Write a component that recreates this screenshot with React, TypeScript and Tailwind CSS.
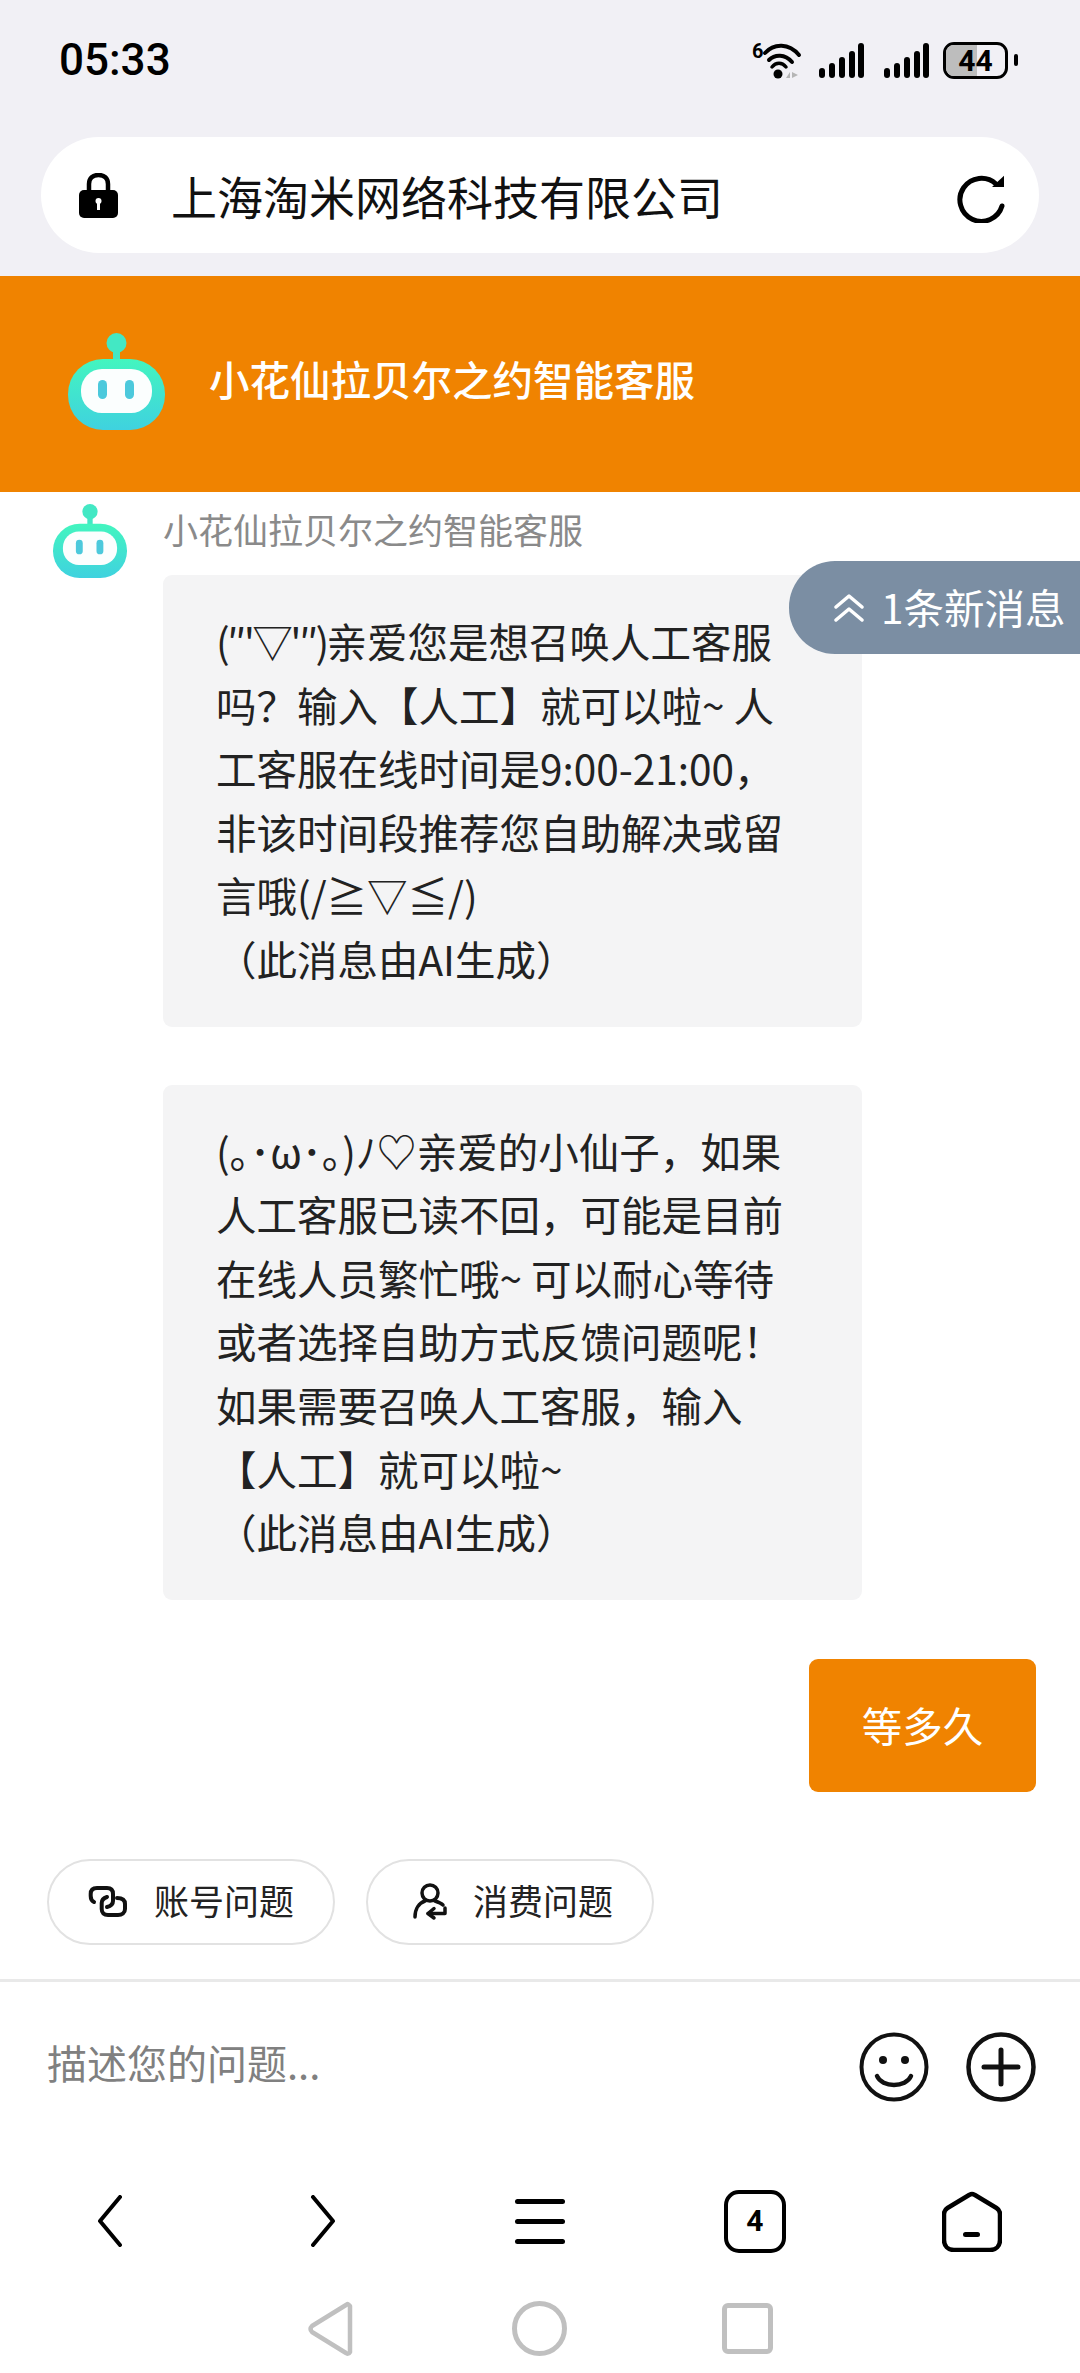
import React, { useId } from 'react';

const FONT = "font-['Noto_Sans_CJK_SC','Noto_Sans',sans-serif]";

const FIRST_REPLY: React.ReactNode[] = [
  <><span className="tracking-[-2.6px]">(″'▽'″)</span>亲爱您是想召唤人工客服</>,
  '吗？输入【人工】就可以啦~ 人',
  '工客服在线时间是9:00-21:00，',
  '非该时间段推荐您自助解决或留',
  '言哦(/≧▽≦/)',
  '（此消息由AI生成）',
];

const SECOND_REPLY: React.ReactNode[] = [
  '(｡･ω･｡)ﾉ♡亲爱的小仙子，如果',
  '人工客服已读不回，可能是目前',
  '在线人员繁忙哦~ 可以耐心等待',
  '或者选择自助方式反馈问题呢！',
  '如果需要召唤人工客服，输入',
  '【人工】就可以啦~',
  '（此消息由AI生成）',
];

function RobotIcon({ className }: { className: string }) {
  const id = useId();
  return (
    <svg viewBox="0 0 97 97" className={className}>
      <defs>
        <linearGradient id={id} x1="0" y1="0" x2="0" y2="1">
          <stop offset="0" stopColor="#43f5bf" />
          <stop offset="1" stopColor="#3fd2df" />
        </linearGradient>
      </defs>
      <circle cx="48.5" cy="10" r="10" fill="#43e8c4" />
      <rect x="45" y="16" width="7" height="13" fill="#43e8c4" />
      <rect x="0" y="26" width="97" height="71" rx="35" fill={`url(#${id})`} />
      <rect x="13" y="36" width="71" height="44" rx="21" fill="#fbfefe" />
      <rect x="30" y="47" width="9" height="19" rx="4.5" fill="#4cc9dc" />
      <rect x="57" y="47" width="9" height="19" rx="4.5" fill="#4cc9dc" />
    </svg>
  );
}

function SignalIcon() {
  return (
    <svg viewBox="0 0 45 36" className="w-[45px] h-[36px]" fill="#000">
      <rect x="0" y="25" width="6" height="10" rx="3" />
      <rect x="10" y="20" width="6" height="15" rx="3" />
      <rect x="20" y="14" width="6" height="21" rx="3" />
      <rect x="30" y="8" width="6" height="27" rx="3" />
      <rect x="39" y="0" width="6" height="35" rx="3" />
    </svg>
  );
}

function StatusBar() {
  return (
    <div className="h-[137px] pl-[59px] pr-[62px] flex justify-between">
      <span className="mt-[34px] font-['Roboto',sans-serif] font-medium text-[44px] leading-[52px] text-black">05:33</span>
      <div className="mt-[42px] h-[38px] flex items-start">
        <svg viewBox="0 0 49 38" className="w-[49px] h-[38px] overflow-visible" fill="none" stroke="#000" strokeLinecap="round">
          <text x="0" y="16" fontSize="20" fontWeight="700" fontFamily="Roboto" fill="#000" stroke="none">6</text>
          <path d="M13 11C22 1 37 1 47 13" strokeWidth="4" />
          <path d="M17 18C23 12 33 12 40 20" strokeWidth="4" />
          <path d="M20 25C24 20 30 20 34 25" strokeWidth="3.500" />
          <circle cx="26" cy="32" r="4.500" fill="#000" stroke="none" />
          <path d="M38 36V30L34 36ZM40 30V36L46 33Z" fill="#b5b5b5" stroke="none" />
        </svg>
        <div className="ml-[18px] mt-[1px]"><SignalIcon /></div>
        <div className="ml-[20px] mt-[1px]"><SignalIcon /></div>
        <div className="ml-[14px] relative w-[65px] h-[37px] rounded-[11px] border-[3px] border-black overflow-hidden flex items-center justify-center">
          <div className="absolute left-0 top-0 bottom-0 w-[31px] bg-[#bdbdbd]" />
          <span className="relative font-['Roboto',sans-serif] font-bold text-[30px] leading-none text-black">44</span>
        </div>
        <div className="ml-[6px] mt-[12px] w-[4px] h-[12px] rounded-full bg-black" />
      </div>
    </div>
  );
}

function UrlBar() {
  return (
    <div className="mx-[41px] h-[116px] rounded-[58px] bg-white flex items-center pl-[38px] pr-[34px]">
      <svg viewBox="0 0 39 45" className="w-[39px] h-[45px] shrink-0">
        <path d="M10 20V11C10 5 14 2 19.500 2C25 2 29 5 29 11V20" fill="none" stroke="#000" strokeWidth="4.500" />
        <rect x="0" y="17" width="39" height="28" rx="5" fill="#000" />
        <circle cx="19.500" cy="28" r="3" fill="#fff" />
        <rect x="18" y="29" width="3" height="8" fill="#fff" />
      </svg>
      <span className="ml-[53px] text-[46px] leading-none text-[#111] whitespace-nowrap">上海淘米网络科技有限公司</span>
      <svg viewBox="0 0 50 50" className="ml-auto mt-[6px] w-[50px] h-[50px]" fill="none" stroke="#000" strokeWidth="5" strokeLinecap="round">
        <path d="M47 33A21.500 21.500 0 1 1 41 11" />
        <path d="M49 2.700V14H37Z" fill="#000" stroke="none" />
      </svg>
    </div>
  );
}

function Bubble({ lines }: { lines: React.ReactNode[] }) {
  return (
    <div className="w-[699px] rounded-[9px] bg-[#f4f4f5] pl-[53px] pt-[34px] pb-[36px] text-[40.5px] leading-[63.6px] text-[#222]">
      {lines.map((line, i) => (
        <div key={i} className="whitespace-nowrap">{line}</div>
      ))}
    </div>
  );
}

function Chip({ icon, label, className }: { icon: React.ReactNode; label: string; className: string }) {
  return (
    <div className={`h-[86px] w-[288px] rounded-[43px] border-2 border-[#e2e2e2] flex items-center text-[35px] text-[#222] ${className}`}>
      {icon}
      <span className="pb-[2px] whitespace-nowrap">{label}</span>
    </div>
  );
}

function BottomNav() {
  return (
    <div className="h-[63px] px-[3px] grid grid-cols-5 place-items-center">
      <svg viewBox="0 0 26 52" className="w-[26px] h-[52px]" fill="none" stroke="#000" strokeWidth="4" strokeLinecap="round" strokeLinejoin="round">
        <path d="M23 2L3 26L23 50" />
      </svg>
      <svg viewBox="0 0 26 52" className="mr-[4px] w-[26px] h-[52px]" fill="none" stroke="#000" strokeWidth="4" strokeLinecap="round" strokeLinejoin="round">
        <path d="M3 2L23 26L3 50" />
      </svg>
      <div className="w-[50px] flex flex-col gap-[15px]">
        <div className="h-[5px] rounded-full bg-black" />
        <div className="h-[5px] rounded-full bg-black" />
        <div className="h-[5px] rounded-full bg-black" />
      </div>
      <div className="w-[62px] h-[63px] rounded-[15px] border-[4px] border-black flex items-center justify-center">
        <span className="font-['Roboto',sans-serif] font-bold text-[30px] leading-none text-black">4</span>
      </div>
      <svg viewBox="0 0 60 61" className="ml-[4px] w-[60px] h-[61px]" fill="none" stroke="#000" strokeWidth="4.500" strokeLinejoin="round">
        <path d="M27.500 3.800C29 2.800 31 2.800 32.500 3.800L54.500 17C57 18.500 58 20.500 58 23V49C58 55 54 59 48 59H12C6 59 2 55 2 49V23C2 20.500 3 18.500 5.500 17Z" />
        <rect x="21" y="41" width="17" height="5" rx="2.500" fill="#000" stroke="none" />
      </svg>
    </div>
  );
}

function SystemNav() {
  return (
    <div className="h-[56px] flex">
      <svg viewBox="0 0 45 56" className="ml-[308px] w-[45px] h-[56px]" fill="none" stroke="#c0c0c0" strokeWidth="4.500" strokeLinejoin="round">
        <path d="M41 4C40 3 39 3 38 4L4 25C2 27 2 29 4 31L38 52C39 53 41 53 42 51V5Z" />
      </svg>
      <div className="ml-[159px] w-[55px] h-[55px] rounded-full border-[5px] border-[#c0c0c0]" />
      <div className="ml-[155px] mt-[2px] w-[51px] h-[51px] rounded-[6px] border-[5px] border-[#c0c0c0]" />
    </div>
  );
}

export default function App() {
  return (
    <div className={`relative w-[1080px] h-[2373px] overflow-hidden bg-white flex flex-col ${FONT}`}>
      <div className="bg-[#f1f0f5] h-[276px]">
        <StatusBar />
        <UrlBar />
      </div>

      <div className="h-[216px] bg-[#f08300] flex items-center pl-[68px]">
        <RobotIcon className="w-[97px] h-[97px] mb-[6px]" />
        <span className="ml-[44px] mb-[10px] text-[40.5px] font-medium text-white whitespace-nowrap">小花仙拉贝尔之约智能客服</span>
      </div>

      <div className="pt-[12px] flex flex-col">
        <div className="flex pl-[53px]">
          <RobotIcon className="w-[74px] h-[74px] shrink-0" />
          <div className="ml-[36px] flex flex-col">
            <div className="h-[50px] flex items-center text-[35px] text-[#8a8a8a] whitespace-nowrap">小花仙拉贝尔之约智能客服</div>
            <div className="mt-[21px]"><Bubble lines={FIRST_REPLY} /></div>
            <div className="mt-[58px]"><Bubble lines={SECOND_REPLY} /></div>
          </div>
        </div>
        <div className="self-end mr-[44px] mt-[59px] w-[227px] h-[133px] rounded-[9px] bg-[#f08300] flex items-center justify-center text-[40.5px] text-white">
          等多久
        </div>
      </div>

      <div className="mt-[67px] pl-[47px] flex gap-[31px]">
        <Chip
          className="pl-[39px]"
          label="账号问题"
          icon={
            <svg viewBox="0 0 40 34" className="w-[40px] h-[34px] mr-[26px] shrink-0" fill="none" stroke="#111" strokeWidth="4" strokeLinecap="round">
              <path d="M6 17C4 16 2.700 14 2.700 11V9C2.700 5 5 3 9 3H19C23 3 25 5 25 9V16C25 19 23 21 19 22" />
              <path d="M29 13C34 13 37 15 37 19V24C37 28 34 30 30 30H20C16 30 13.700 28 13.700 24V18C13.700 15 16 13 19 12" />
            </svg>
          }
        />
        <Chip
          className="pl-[44px]"
          label="消费问题"
          icon={
            <svg viewBox="0 0 36 40" className="w-[36px] h-[40px] mr-[25px] shrink-0" fill="none" stroke="#111" strokeWidth="3.500" strokeLinecap="round" strokeLinejoin="round">
              <circle cx="18" cy="11" r="8" />
              <path d="M3 35C3 27 7 21 13 19" />
              <path d="M23 19C26 20 29 21 31 23" />
              <path d="M33 26V31.500H16" />
              <path d="M22 26.500L16 31.500L22 36" />
            </svg>
          }
        />
      </div>

      <div className="mt-[34px] h-[3px] bg-[#e9e9e9]" />

      <div className="h-[208px] pt-[50px] pl-[47px] pr-[44px] flex items-start">
        <span className="text-[40px] leading-[60px] text-[#808080] whitespace-nowrap">描述您的问题...</span>
        <svg viewBox="0 0 70 70" className="ml-auto w-[70px] h-[70px]" fill="none" stroke="#111" strokeWidth="4" strokeLinecap="round">
          <circle cx="35" cy="35" r="32.500" />
          <circle cx="24" cy="28" r="4" fill="#111" stroke="none" />
          <circle cx="46" cy="28" r="4" fill="#111" stroke="none" />
          <path d="M18 44C23 56 47 56 52 44" strokeWidth="4.500" />
        </svg>
        <svg viewBox="0 0 70 70" className="ml-[37px] w-[70px] h-[70px]" fill="none" stroke="#111" strokeWidth="4.500" strokeLinecap="round">
          <circle cx="35" cy="35" r="32.500" />
          <path d="M18 35H52M35 18V52" strokeWidth="5" />
        </svg>
      </div>

      <BottomNav />
      <div className="mt-[48px]"><SystemNav /></div>

      <div className="absolute left-[789px] top-[561px] w-[291px] h-[93px] rounded-l-[46px] bg-[#7b8ea3] flex items-center pl-[45px] text-white">
        <svg viewBox="0 0 30 30" className="w-[30px] h-[30px] shrink-0" fill="none" stroke="#fff" strokeWidth="3.500" strokeLinecap="round" strokeLinejoin="round">
          <path d="M2 14L15 3L28 14" />
          <path d="M2 27L15 16L28 27" />
        </svg>
        <span className="ml-[17px] text-[40.5px] whitespace-nowrap">1条新消息</span>
      </div>
    </div>
  );
}
